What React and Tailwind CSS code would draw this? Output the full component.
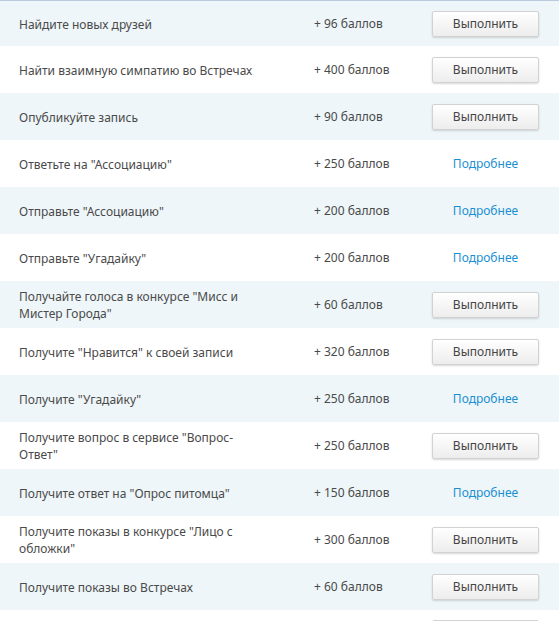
import React from "react";

const tasks = [
  { title: "Найдите новых друзей", points: 96, action: "do" },
  { title: "Найти взаимную симпатию во Встречах", points: 400, action: "do" },
  { title: "Опубликуйте запись", points: 90, action: "do" },
  { title: 'Ответьте на "Ассоциацию"', points: 250, action: "more" },
  { title: 'Отправьте "Ассоциацию"', points: 200, action: "more" },
  { title: 'Отправьте "Угадайку"', points: 200, action: "more" },
  { title: 'Получайте голоса в конкурсе "Мисс и Мистер Города"', points: 60, action: "do" },
  { title: 'Получите "Нравится" к своей записи', points: 320, action: "do" },
  { title: 'Получите "Угадайку"', points: 250, action: "more" },
  { title: 'Получите вопрос в сервисе "Вопрос-Ответ"', points: 250, action: "do" },
  { title: 'Получите ответ на "Опрос питомца"', points: 150, action: "more" },
  { title: 'Получите показы в конкурсе "Лицо с обложки"', points: 300, action: "do" },
  { title: "Получите показы во Встречах", points: 60, action: "do" },
];

function DoButton({ children }) {
  return (
    <button className="w-[107px] h-[26px] border border-[#d2d2d2] rounded-[2px] bg-gradient-to-b from-white to-[#ededed] shadow-[0_1px_2px_rgba(0,0,0,0.15)] text-[#454545]">
      {children}
    </button>
  );
}

function TaskRow({ task, index }) {
  const striped = index % 2 === 0;
  return (
    <div
      className={`grid grid-cols-[295px_118px_107px] items-center pl-[19px] pr-[20px] pt-px ${
        index === 0 ? "h-[45px]" : "h-[47px]"
      } ${striped ? "bg-[#eef6f9]" : "bg-white"}`}
    >
      <div className="w-[245px] leading-[17px]">{task.title}</div>
      <div>+ {task.points} баллов</div>
      <div className="flex justify-center">
        {task.action === "do" ? (
          <DoButton>Выполнить</DoButton>
        ) : (
          <a href="#" className="text-[#1b8fd2]">
            Подробнее
          </a>
        )}
      </div>
    </div>
  );
}

export default function App() {
  return (
    <div className="w-[559px] h-[621px] overflow-hidden bg-white font-['Noto_Sans',sans-serif] text-[12px] text-[#4a4a4a]">
      <div className="border-t border-[#b7cbdc]">
        {tasks.map((task, i) => (
          <TaskRow key={task.title} task={task} index={i} />
        ))}
        {/* next row, only the top of its button peeks in */}
        <div className="grid grid-cols-[295px_118px_107px] pl-[19px] pr-[20px] pt-[10px] h-[47px] bg-white">
          <div />
          <div />
          <div className="w-[107px] h-[26px] border border-[#d2d2d2] rounded-[2px] bg-gradient-to-b from-white to-[#ededed]" />
        </div>
      </div>
    </div>
  );
}
